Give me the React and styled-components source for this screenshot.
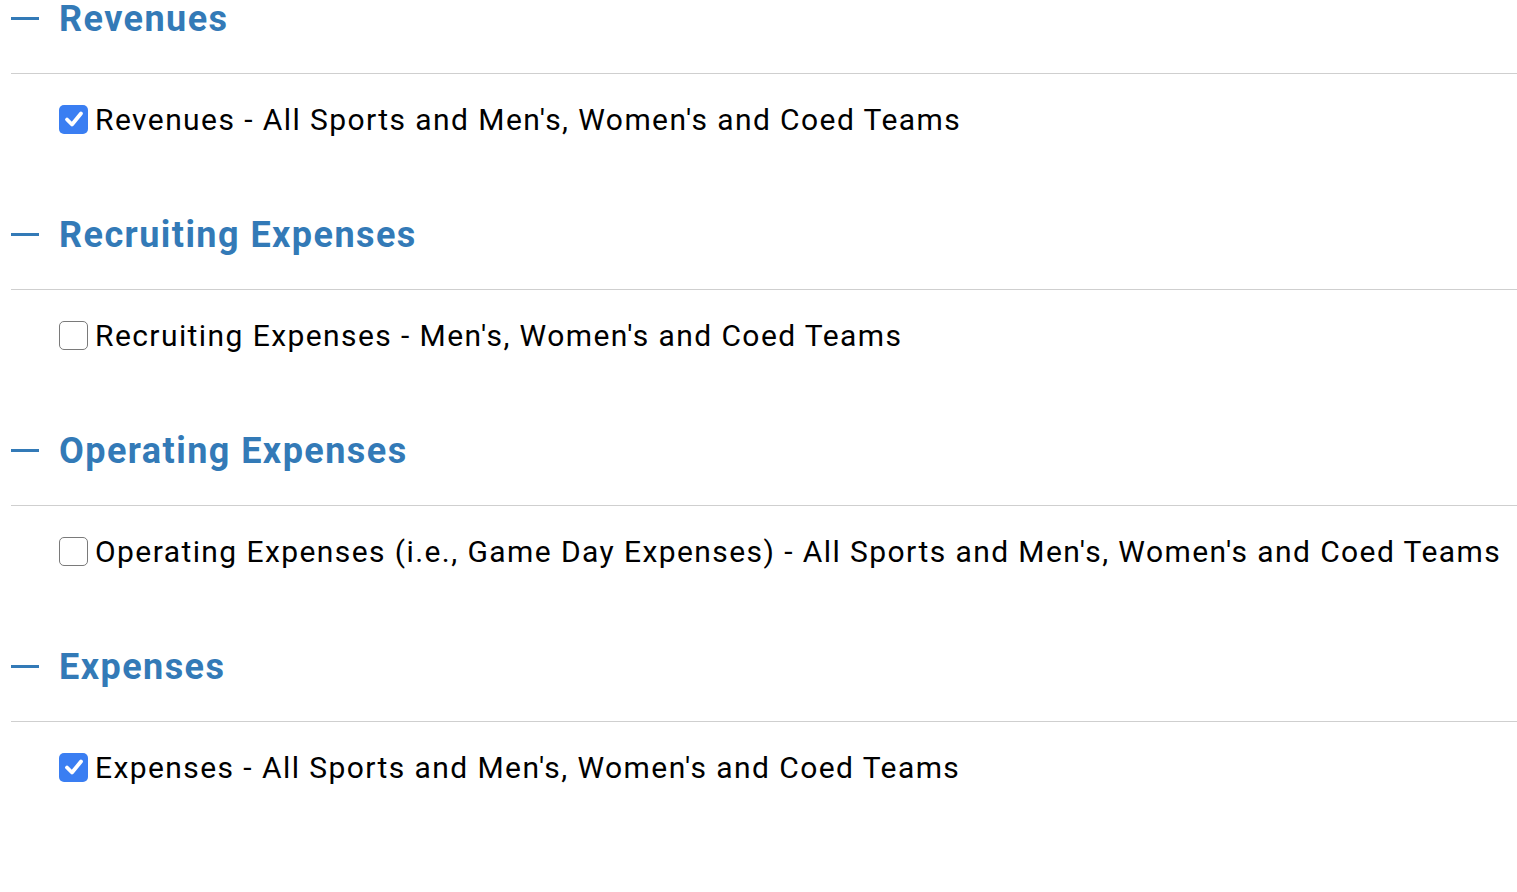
import React from "react";
import styled, { createGlobalStyle } from "styled-components";

const Global = createGlobalStyle`
  html, body { margin: 0; padding: 0; background: #fff; }
  body { font-family: Roboto, "Liberation Sans", sans-serif; }
`;

const Page = styled.div`
  padding-left: 11px;
`;

const Section = styled.section`
  margin-bottom: 79px;
`;

const Header = styled.div`
  display: flex;
  align-items: center;
  gap: 20px;
  height: 36px;
  padding-bottom: 37px;
  border-bottom: 1px solid #cfcfcf;
`;

const Dash = styled.span`
  width: 28px;
  height: 3px;
  background: #337ab7;
  flex: none;
`;

const Title = styled.h2`
  margin: 0;
  padding-top: 2px;
  font-size: 36px;
  line-height: 36px;
  font-weight: 700;
  color: #337ab7;
  letter-spacing: 1.44px;
`;

const Row = styled.label`
  display: flex;
  align-items: center;
  gap: 7px;
  padding: 27px 0 0 48px;
  height: 36px;
`;

const Box = styled.span`
  width: 29px;
  height: 29px;
  box-sizing: border-box;
  border-radius: 5px;
  flex: none;
  display: flex;
  align-items: center;
  justify-content: center;
  background: ${(p) => (p.$checked ? "#3a7ef2" : "#fff")};
  border: ${(p) => (p.$checked ? "none" : "1.5px solid #7a7a7a")};
`;

const Label = styled.span`
  padding-top: 2px;
  font-size: 30px;
  line-height: 36px;
  color: #000;
  letter-spacing: 1.42px;
  white-space: nowrap;
`;

const sections = [
  { title: "Revenues", label: "Revenues - All Sports and Men's, Women's and Coed Teams", checked: true },
  { title: "Recruiting Expenses", label: "Recruiting Expenses - Men's, Women's and Coed Teams", checked: false },
  { title: "Operating Expenses", label: "Operating Expenses (i.e., Game Day Expenses) - All Sports and Men's, Women's and Coed Teams", checked: false },
  { title: "Expenses", label: "Expenses - All Sports and Men's, Women's and Coed Teams", checked: true },
];

function Check({ checked }) {
  return (
    <Box $checked={checked}>
      {checked && (
        <svg width="22" height="22" viewBox="0 0 22 22">
          <path d="M4 11.5 L9 16.5 L18 5.5" fill="none" stroke="#fff" strokeWidth="3.8" strokeLinecap="round" strokeLinejoin="round" />
        </svg>
      )}
    </Box>
  );
}

export default function App() {
  return (
    <Page>
      <Global />
      {sections.map((s) => (
        <Section key={s.title}>
          <Header>
            <Dash />
            <Title>{s.title}</Title>
          </Header>
          <Row>
            <Check checked={s.checked} />
            <Label>{s.label}</Label>
          </Row>
        </Section>
      ))}
    </Page>
  );
}
